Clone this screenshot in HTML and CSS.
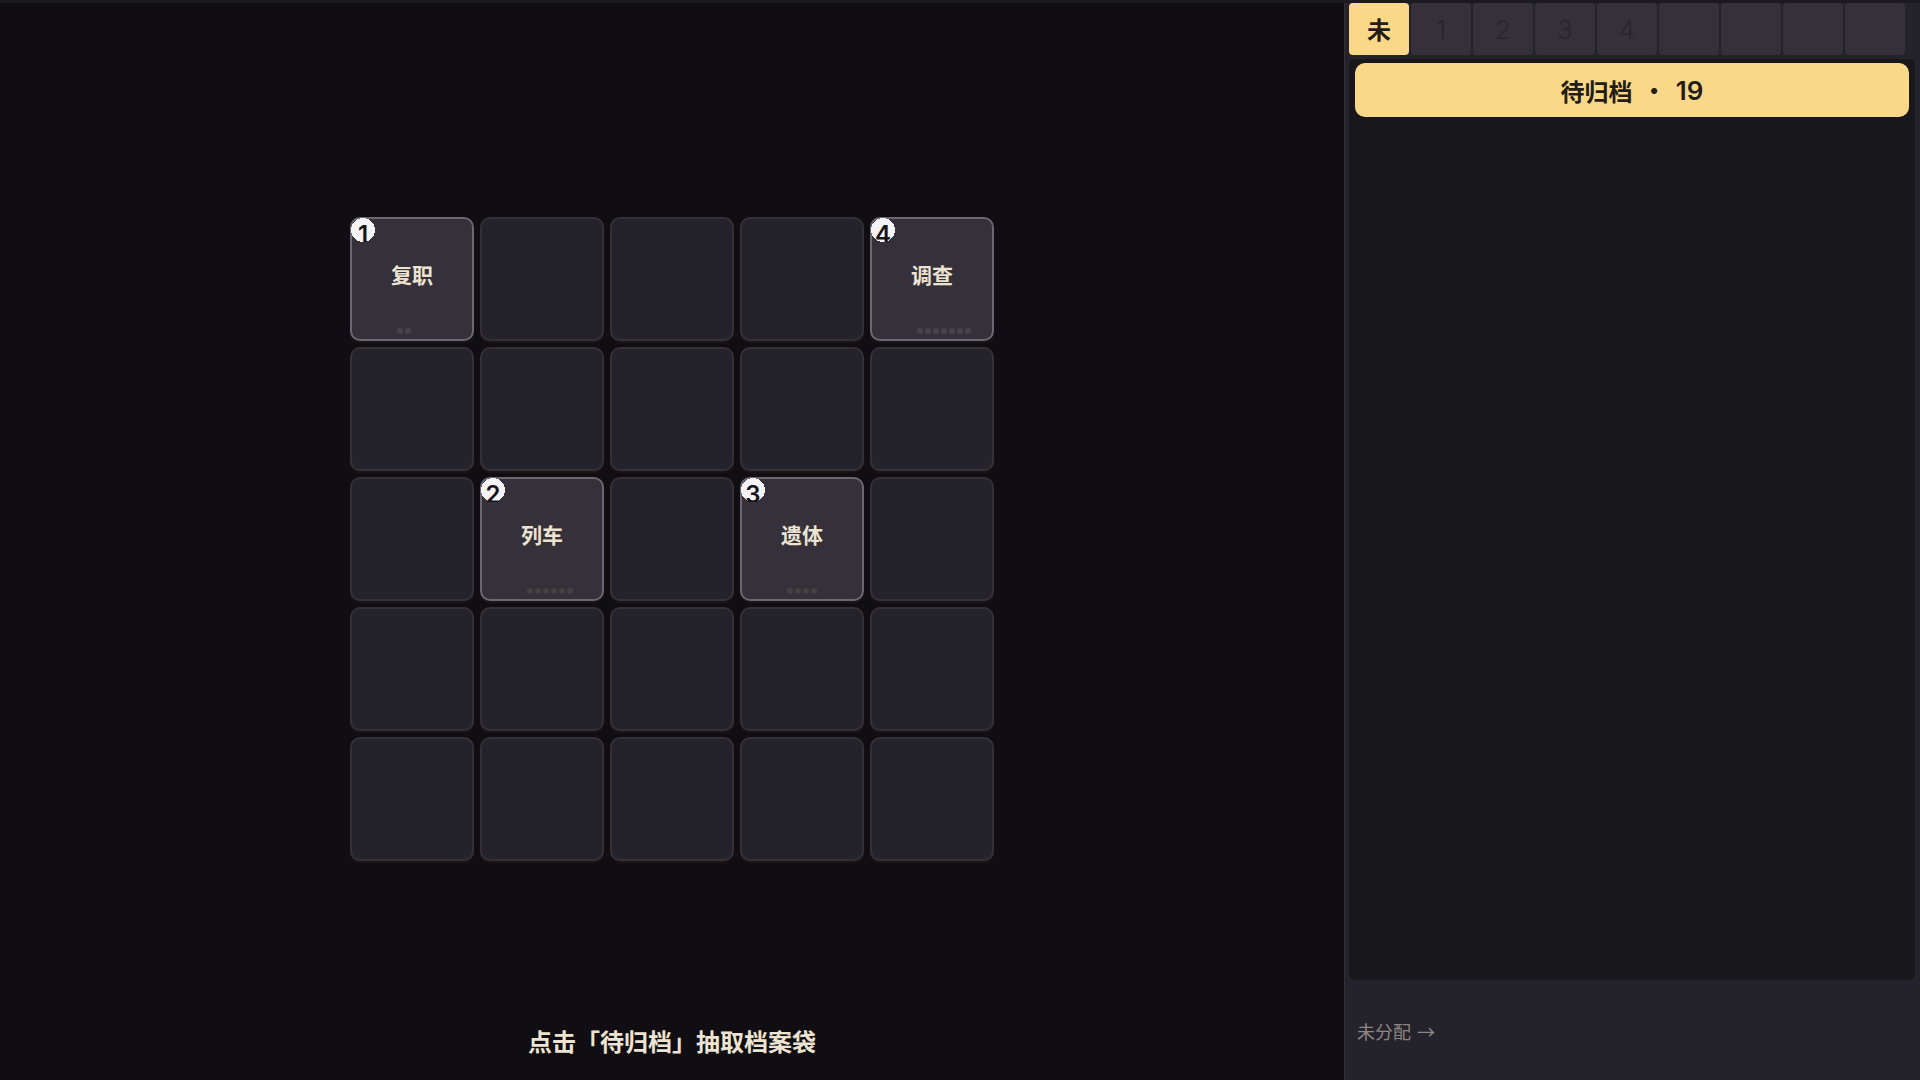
FILE: index.html
```
<!DOCTYPE html>
<html lang="zh-CN">
<head>
    <meta charset="UTF-8">
    <meta name="viewport" content="width=device-width, initial-scale=1.0">
    <title>档案</title>
    <link rel="stylesheet" href="styles.css">
</head>
<body>
    <main class="stage">
        <div class="board">
            <button class="cell card"><span class="badge">1</span><span class="name">复职</span><span class="dots"><i></i><i></i></span></button>
            <div class="cell"></div>
            <div class="cell"></div>
            <div class="cell"></div>
            <button class="cell card"><span class="badge">4</span><span class="name">调查</span><span class="dots"><i></i><i></i><i></i><i></i><i></i><i></i><i></i></span></button>

            <div class="cell"></div>
            <div class="cell"></div>
            <div class="cell"></div>
            <div class="cell"></div>
            <div class="cell"></div>

            <div class="cell"></div>
            <button class="cell card"><span class="badge">2</span><span class="name">列车</span><span class="dots warm"><i></i><i></i><i></i><i></i><i></i><i></i></span></button>
            <div class="cell"></div>
            <button class="cell card"><span class="badge">3</span><span class="name">遗体</span><span class="dots warm"><i></i><i></i><i></i><i></i></span></button>
            <div class="cell"></div>

            <div class="cell"></div>
            <div class="cell"></div>
            <div class="cell"></div>
            <div class="cell"></div>
            <div class="cell"></div>

            <div class="cell"></div>
            <div class="cell"></div>
            <div class="cell"></div>
            <div class="cell"></div>
            <div class="cell"></div>
        </div>
        <p class="hint">点击「待归档」抽取档案袋</p>
    </main>

    <aside class="sidebar">
        <nav class="tabs">
            <button class="tab active">未</button>
            <button class="tab">1</button>
            <button class="tab">2</button>
            <button class="tab">3</button>
            <button class="tab">4</button>
            <button class="tab" disabled></button>
            <button class="tab" disabled></button>
            <button class="tab" disabled></button>
            <button class="tab" disabled></button>
        </nav>
        <section class="list">
            <button class="draw"><span>待归档</span> <span class="sep">·</span> <span class="count">19</span></button>
        </section>
        <footer class="status"><span>未分配</span> <span>→</span></footer>
    </aside>
</body>
</html>
```
FILE: styles.css
```
* {
    box-sizing: border-box;
}
body {
    margin: 0;
    min-height: 100vh;
    display: grid;
    grid-template-columns: 70% 30%;
    background-color: #100d13;
    border-top: 3px solid #1c1a21;
    color: #ece3d0;
    font-family: Inter, "Noto Sans CJK SC", sans-serif;
}
button {
    font-family: inherit;
    border: none;
    padding: 0;
    cursor: pointer;
}

/* board */
.stage {
    display: grid;
    grid-template-rows: 1fr auto;
    justify-items: center;
    align-items: center;
    padding: 52px 24px 17px;
}
.board {
    display: grid;
    grid-template-columns: repeat(5, 1fr);
    gap: 6px;
    width: 100%;
    max-width: 644px;
}
.cell {
    position: relative;
    aspect-ratio: 1;
    background-color: #24222a;
    border: 2px solid #343036;
    border-radius: 10px;
    box-shadow: 0 2px 2px #1d1719;
}
.card {
    display: grid;
    grid-template-rows: 1fr 16px;
    padding-top: 6px;
    background-color: #35303a;
    border-color: #6b6670;
    color: #ece3d0;
}
.badge {
    position: absolute;
    top: -1px;
    left: -1px;
    width: 24px;
    height: 24px;
    background: radial-gradient(circle, #f4f3f5 12px, transparent 12px);
    color: #16141a;
    font-size: 24px;
    font-weight: 600;
    line-height: 34px;
    text-align: center;
    overflow: hidden;
}
.name {
    align-self: center;
    font-size: 21px;
    font-weight: 700;
}
.dots {
    display: flex;
    gap: 2px;
    padding: 5px 0 0 45px;
}
.dots i {
    width: 6px;
    height: 6px;
    border-radius: 50%;
    background-color: #48434b;
}
.dots.warm i {
    background-color: #483f40;
}
.hint {
    margin: 0;
    font-size: 24px;
    font-weight: 700;
    line-height: 40px;
}

/* sidebar */
.sidebar {
    display: flex;
    flex-direction: column;
    padding: 0 5px 0 4px;
    background-color: #24222b;
    border-left: 1px solid #343039;
}
.tabs {
    display: grid;
    grid-template-columns: repeat(9, 1fr);
    gap: 2px;
    padding-right: 10px;
}
.tab {
    height: 52px;
    border-radius: 4px;
    background-color: #35303a;
    color: #2a2529;
    font-size: 26px;
    font-weight: 300;
}
.tab.active {
    padding-bottom: 2px;
    background-color: #f9d988;
    color: #241c16;
    font-size: 24px;
    font-weight: 700;
}
.list {
    flex: 1;
    margin-top: 4px;
    padding: 4px 6px;
    border-radius: 6px;
    background-color: #18171c;
}
.draw {
    display: flex;
    justify-content: center;
    align-items: center;
    gap: 16px;
    width: 100%;
    height: 54px;
    border-radius: 10px;
    background-color: #f9d988;
    color: #241c16;
    font-size: 24px;
    font-weight: 700;
}
.sep {
    font-size: 30px;
    font-weight: 900;
}
.count {
    font-size: 26px;
    font-weight: 600;
}
.status {
    display: flex;
    gap: 6px;
    height: 100px;
    padding: 0 8px;
    color: #8f8684;
    font-family: "Noto Sans CJK SC", sans-serif;
    font-size: 18px;
    line-height: 102px;
}
```
